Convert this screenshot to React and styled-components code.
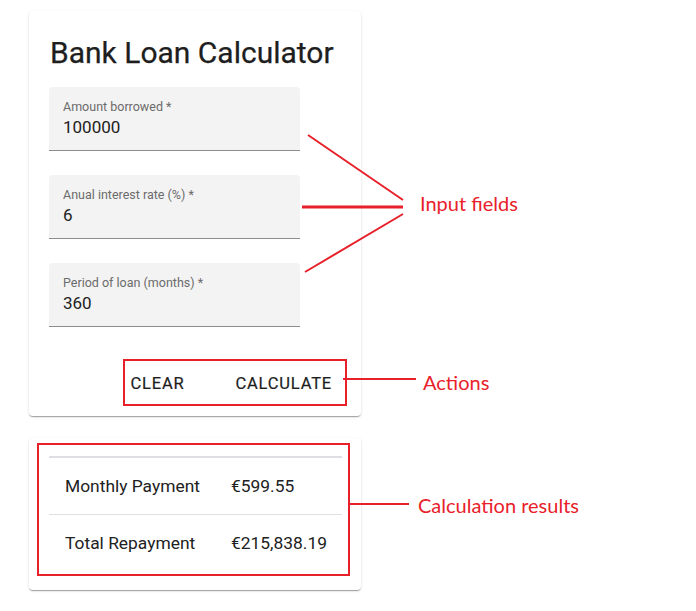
import React from 'react';
import styled, { createGlobalStyle } from 'styled-components';

const Global = createGlobalStyle`
  body {
    margin: 0;
    background: #ffffff;
    font-family: Roboto, "Liberation Sans", sans-serif;
    color: #212121;
  }
`;

const fields = [
  { label: 'Amount borrowed *', value: '100000' },
  { label: 'Anual interest rate (%) *', value: '6' },
  { label: 'Period of loan (months) *', value: '360' },
];

const results = [
  { name: 'Monthly Payment', value: '€599.55' },
  { name: 'Total Repayment', value: '€215,838.19' },
];

const App = () => {
  return (
    <>
      <Global />
      <Page>
        <Column>
          <Card>
            <Title>Bank Loan Calculator</Title>
            <Fields>
              {fields.map(f => (
                <Field key={f.label}>
                  <FieldLabel>{f.label}</FieldLabel>
                  <FieldValue>{f.value}</FieldValue>
                </Field>
              ))}
            </Fields>
            <Actions>
              <TextButton>Clear</TextButton>
              <TextButton>Calculate</TextButton>
            </Actions>
          </Card>
          <Card $results>
            <Table>
              <tbody>
                {results.map(r => (
                  <Row key={r.name}>
                    <Cell $name>{r.name}</Cell>
                    <Cell>{r.value}</Cell>
                  </Row>
                ))}
              </tbody>
            </Table>
          </Card>
        </Column>

        <Overlay width="696" height="611" viewBox="0 0 696 611">
          <g stroke="#e8202a" fill="none">
            <line x1="308" y1="135" x2="403" y2="200" strokeWidth="2" />
            <line x1="302" y1="207" x2="403" y2="207" strokeWidth="3" />
            <line x1="305" y1="272" x2="403" y2="214" strokeWidth="2" />
            <rect x="124" y="360" width="222" height="45" strokeWidth="2" />
            <line x1="343" y1="379" x2="416" y2="379" strokeWidth="2" />
            <rect x="38" y="444" width="311" height="131" strokeWidth="2" />
            <line x1="350" y1="504" x2="409" y2="504" strokeWidth="2" />
          </g>
        </Overlay>
        <Note style={{ left: 420, top: 190 }}>Input fields</Note>
        <Note style={{ left: 423, top: 369 }}>Actions</Note>
        <Note style={{ left: 418, top: 492 }}>Calculation results</Note>
      </Page>
    </>
  );
};

export default App;

const Page = styled.div`
  position: relative;
  width: 696px;
  height: 611px;
  padding: 11px 0 0 29px;
  box-sizing: border-box;
`;

const Column = styled.div`
  display: flex;
  flex-direction: column;
  gap: 22px;
  width: 332px;
`;

const Card = styled.div`
  background: #fff;
  border-radius: 4px;
  box-shadow: 0 2px 1px -1px rgba(0,0,0,0.2), 0 1px 1px 0 rgba(0,0,0,0.14), 0 1px 3px 0 rgba(0,0,0,0.12);
  padding: ${p => (p.$results ? '18px 19px 19px 20px' : '22px 20px 8px 20px')};
`;

const Title = styled.h1`
  margin: 0 0 14px 1px;
  font-size: 30px;
  font-weight: 400;
  line-height: 40px;
  color: #1e1e1e;
  -webkit-text-stroke: 0.25px #1e1e1e;
`;

const Fields = styled.div`
  display: flex;
  flex-direction: column;
  gap: 24px;
  width: 251px;
`;

const Field = styled.div`
  height: 64px;
  box-sizing: border-box;
  background: #f3f3f3;
  border-radius: 4px 4px 0 0;
  border-bottom: 1px solid #8c8c8c;
  padding: 12px 14px 0;
`;

const FieldLabel = styled.div`
  font-size: 12.5px;
  line-height: 16px;
  color: #6b6b6b;
`;

const FieldValue = styled.div`
  margin-top: 1px;
  font-size: 17px;
  line-height: 22px;
  color: #212121;
`;

const Actions = styled.div`
  display: flex;
  justify-content: flex-end;
  gap: 35px;
  padding: 39px 1px 6px 0;
`;

const TextButton = styled.button`
  border: none;
  background: none;
  padding: 8px 8px;
  font-family: Roboto, "Liberation Sans", sans-serif;
  font-size: 16.5px;
  font-weight: 400;
  letter-spacing: 0.8px;
  text-transform: uppercase;
  color: #1e1e1e;
  -webkit-text-stroke: 0.2px #1e1e1e;
  line-height: 20px;
  cursor: pointer;
`;

const Table = styled.table`
  width: 100%;
  border-collapse: collapse;
  border-top: 2px solid #dedfe2;
`;

const Row = styled.tr`
  & + & td {
    border-top: 1px solid #e0e0e0;
  }
`;

const Cell = styled.td`
  height: 56px;
  padding: 0 0 0 16px;
  width: ${p => (p.$name ? '150px' : 'auto')};
  font-size: 17.4px;
  color: #212121;
  text-align: left;
`;

const Overlay = styled.svg`
  position: absolute;
  left: 0;
  top: 0;
  pointer-events: none;
`;

const Note = styled.div`
  position: absolute;
  font-family: Lato, "Open Sans", sans-serif;
  font-size: 20px;
  line-height: 26px;
  color: #e8202a;
`;
